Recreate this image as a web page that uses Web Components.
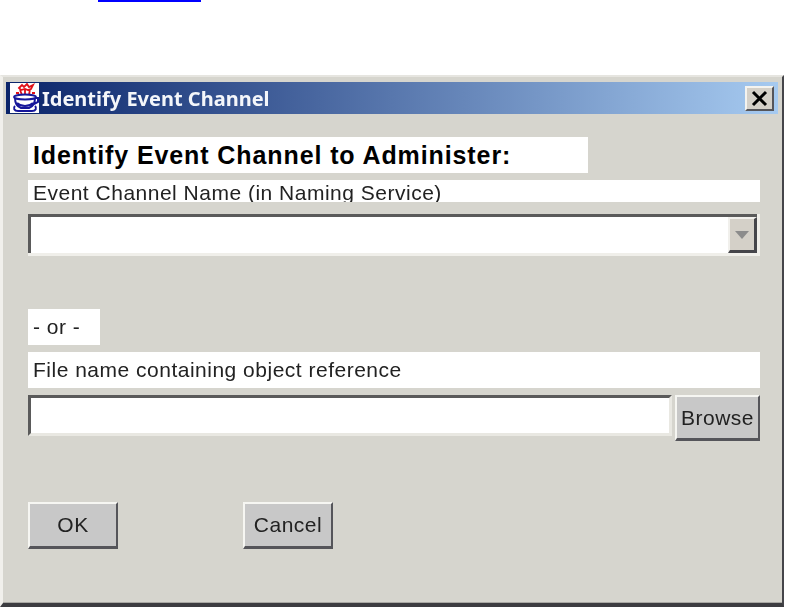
<!DOCTYPE html>
<html>
<head>
<meta charset="utf-8">
<title>Identify Event Channel</title>
<style>
  html, body { margin: 0; padding: 0; background: #fff; height: 607px; overflow: hidden; }
  body { font-family: "Liberation Sans", Arial, sans-serif; }
  .link-rule { display: block; width: 103px; height: 2px; margin-left: 98px; background: #0000ff; }
  .spacer-top { height: 73px; }
</style>
</head>
<body>
<a class="link-rule" href="#" aria-label="link"></a>
<div class="spacer-top"></div>
<dialog-window heading="Identify Event Channel">
  <panel-label kind="heading" style="width:560px;height:36px;margin-bottom:7px">Identify Event Channel to Administer:</panel-label>
  <panel-label kind="clipped" style="width:732px;height:22px;margin-bottom:12px">Event Channel Name (in Naming Service)</panel-label>
  <combo-box style="margin-bottom:53px"></combo-box>
  <panel-label style="width:72px;height:36px;margin-bottom:7px">- or -</panel-label>
  <panel-label style="width:732px;height:36px;margin-bottom:7px">File name containing object reference</panel-label>
  <file-row style="margin-bottom:61px"></file-row>
  <div style="display:flex;gap:125px">
    <push-button style="width:90px;height:47px">OK</push-button>
    <push-button style="width:90px;height:47px">Cancel</push-button>
  </div>
</dialog-window>

<script>
class DialogWindow extends HTMLElement {
  constructor() {
    super();
    const root = this.attachShadow({mode: 'open'});
    root.innerHTML = `
      <style>
        :host {
          display: block;
          box-sizing: border-box;
          width: 784px;
          height: 532px;
          background: #d6d5ce;
          border-top: 2px solid #e6e5e0;
          border-left: 3px solid #f1f0ec;
          border-right: 2px solid #45454a;
          border-bottom: 4px solid #3c3c40;
          box-shadow: inset 0 -1px 0 #a9a8a3;
        }
        .title {
          display: flex;
          align-items: center;
          height: 32px;
          margin: 5px 4px 0 3px;
          padding-left: 4px;
          background: linear-gradient(90deg, #0a246a 0%, #a6caf0 100%);
          filter: blur(0.35px);
        }
        .title span {
          margin-left: 3px;
          flex: 1;
          color: #f4f6fa;
          font: bold 20px "Noto Sans", sans-serif;
        }
        svg.cup { width: 29px; height: 30px; display: block; background: #fff; }
        .close {
          box-sizing: border-box;
          width: 29px; height: 25px;
          margin-right: 4px;
          background: #d4d0c8;
          border: 2px solid;
          border-color: #f4f3ef #55555a #55555a #f4f3ef;
          display: flex; align-items: center; justify-content: center;
        }
        .body {
          display: flex;
          flex-direction: column;
          align-items: flex-start;
          padding: 23px 0 0 25px;
          filter: blur(0.35px);
        }
      </style>
      <div class="title">
        <svg class="cup" viewBox="0 0 29 30" fill="none">
          <path d="M9 5l3-3 2 2 3-3 2 3 4-2-2 4-3 1-3-1-4 1zM10 7l2 5M15 6l0 6M20 6l-1 6M6 10h3M22 10h3" stroke="#e01018" stroke-width="1.8"/>
          <ellipse cx="15" cy="14" rx="11" ry="2.6" stroke="#16169a" stroke-width="2"/>
          <path d="M5 15c0 6 3 9 6 10h8c3-1 6-4 6-10M25 15h3v4l-4 2M7 20c2 2 5 3 8 3s6-1 8-3" stroke="#16169a" stroke-width="2"/>
          <path d="M5 23c-2 2-1 5 3 5h14c4 0 5-3 3-5" stroke="#16169a" stroke-width="2"/>
        </svg>
        <span></span>
        <div class="close">
          <svg width="19" height="17" viewBox="0 0 19 17"><path d="M3 2l13 13M16 2L3 15" stroke="#000" stroke-width="3"/></svg>
        </div>
      </div>
      <div class="body"><slot></slot></div>
    `;
    root.querySelector('.title span').textContent = this.getAttribute('heading');
  }
}

class PanelLabel extends HTMLElement {
  constructor() {
    super();
    const root = this.attachShadow({mode: 'open'});
    root.innerHTML = `
      <style>
        :host {
          display: flex;
          align-items: center;
          box-sizing: border-box;
          padding-left: 5px;
          background: #fff;
          color: #222;
          font: 21px "Liberation Sans", Arial, sans-serif;
          letter-spacing: 0.5px;
          white-space: nowrap;
          overflow: hidden;
        }
        :host([kind="heading"]) {
          color: #000;
          font-weight: bold;
          font-size: 25px;
          letter-spacing: 0.9px;
        }
        :host([kind="clipped"]) {
          padding-top: 4px;
          line-height: 22px;
        }
      </style>
      <slot></slot>
    `;
  }
}

class ComboBox extends HTMLElement {
  constructor() {
    super();
    const root = this.attachShadow({mode: 'open'});
    root.innerHTML = `
      <style>
        :host {
          display: block;
          box-sizing: border-box;
          width: 732px;
          height: 42px;
          border-right: 3px solid #f0efea;
          border-bottom: 3px solid #f0efea;
        }
        .inner {
          display: flex;
          justify-content: flex-end;
          box-sizing: border-box;
          height: 100%;
          background: #fff;
          border-top: 3px solid #5a5a5a;
          border-left: 3px solid #5a5a5a;
        }
        .arrow {
          box-sizing: border-box;
          width: 29px;
          background: #d4d0c8;
          border-style: solid;
          border-color: #f1f0ec #45454a #45454a #f1f0ec;
          border-width: 2px 3px 3px 2px;
          display: flex; align-items: center; justify-content: center;
        }
      </style>
      <div class="inner">
        <div class="arrow">
          <svg width="14" height="8" viewBox="0 0 14 8"><path d="M0 0h14L7 8z" fill="#8c8c8c"/></svg>
        </div>
      </div>
    `;
  }
}

class FileRow extends HTMLElement {
  constructor() {
    super();
    const root = this.attachShadow({mode: 'open'});
    root.innerHTML = `
      <style>
        :host {
          display: flex;
          align-items: flex-start;
          width: 732px;
          gap: 3px;
        }
        .field {
          box-sizing: border-box;
          width: 644px;
          height: 41px;
          background: #fff;
          border: 3px solid;
          border-color: #5a5a5a #e9e8e2 #e9e8e2 #5a5a5a;
        }
        push-button { width: 85px; height: 46px; }
      </style>
      <div class="field"></div>
      <push-button>Browse</push-button>
    `;
  }
}

class PushButton extends HTMLElement {
  constructor() {
    super();
    const root = this.attachShadow({mode: 'open'});
    root.innerHTML = `
      <style>
        :host {
          display: flex;
          align-items: center;
          justify-content: center;
          box-sizing: border-box;
          background: #c8c8c8;
          border: 2px solid;
          border-color: #f6f6f2 #55555a #55555a #f6f6f2;
          border-bottom-width: 3px;
          color: #222;
          font: 21px "Liberation Sans", Arial, sans-serif;
          letter-spacing: 0.5px;
        }
      </style>
      <slot></slot>
    `;
  }
}

customElements.define('dialog-window', DialogWindow);
customElements.define('panel-label', PanelLabel);
customElements.define('combo-box', ComboBox);
customElements.define('file-row', FileRow);
customElements.define('push-button', PushButton);
</script>
</body>
</html>
